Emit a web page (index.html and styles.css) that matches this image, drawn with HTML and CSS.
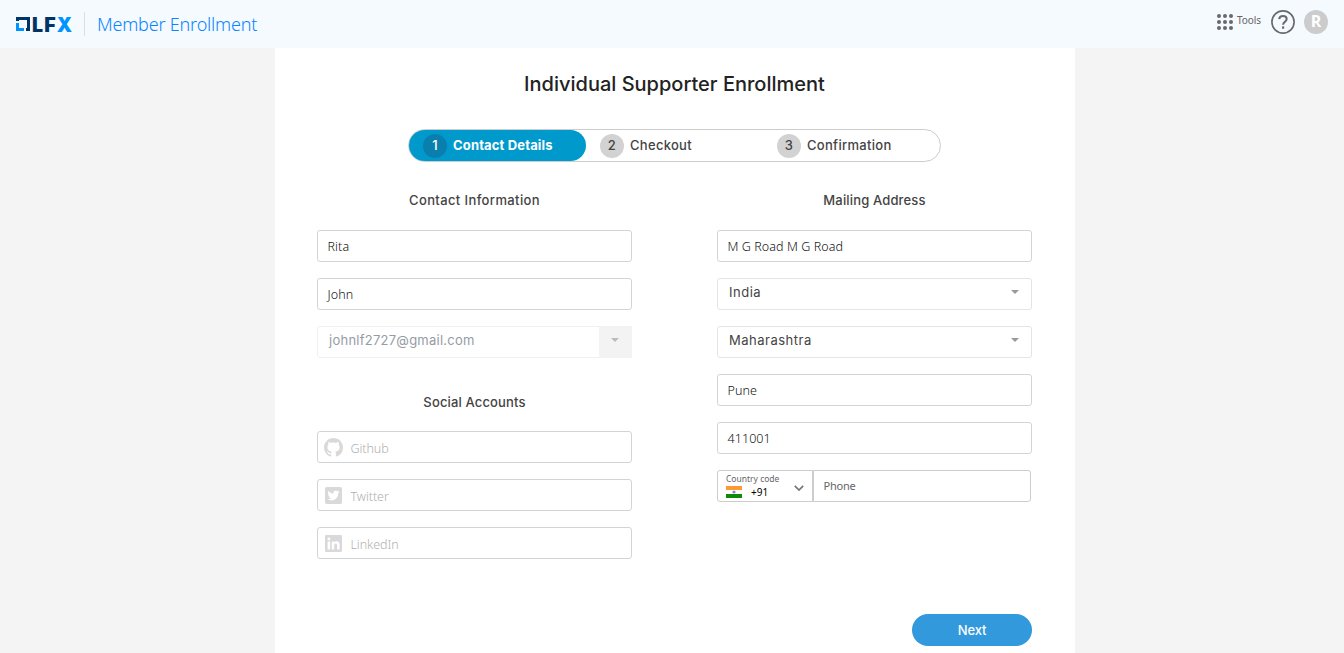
FILE: index.html
```html
<!DOCTYPE html>
<html lang="en">
<head>
<meta charset="utf-8">
<title>Individual Supporter Enrollment</title>
<link rel="stylesheet" href="styles.css">
</head>
<body>
<header class="topbar">
  <div class="logo">
    <svg class="logo-mark" viewBox="0 0 14 14"><path fill="#003366" d="M0 0H14V14H10V11H11V3H3V4H0Z"/><path fill="#0094ff" d="M0 6H3V11H8V14H0Z"/></svg>
    <span class="logo-text">LF<b>X</b></span>
  </div>
  <span class="product">Member Enrollment</span>
  <nav class="tools">
    <svg class="grid-icon" viewBox="0 0 16 16" fill="#666a6d"><circle cx="2" cy="2" r="2"/><circle cx="8" cy="2" r="2"/><circle cx="14" cy="2" r="2"/><circle cx="2" cy="8" r="2"/><circle cx="8" cy="8" r="2"/><circle cx="14" cy="8" r="2"/><circle cx="2" cy="14" r="2"/><circle cx="8" cy="14" r="2"/><circle cx="14" cy="14" r="2"/></svg>
    <span class="tools-label">Tools</span>
    <svg class="help-icon" viewBox="0 0 24 24" fill="none" stroke="#666a6d"><circle cx="12" cy="12" r="11.1" stroke-width="1.6"/><path stroke-width="2" d="M8.2 9.2C8.4 7 9.9 6 12 6s3.7 1.1 3.7 3.1c0 2.5-3.6 2.9-3.6 5.6"/><path stroke-width="2.2" d="M12.1 16.4v2.3"/></svg>
    <span class="avatar">R</span>
  </nav>
</header>
<main class="panel">
  <h1>Individual Supporter Enrollment</h1>
  <ol class="steps">
    <li class="step active"><span class="num">1</span><span class="step-name">Contact Details</span></li>
    <li class="step"><span class="num">2</span><span class="step-name">Checkout</span></li>
    <li class="step"><span class="num">3</span><span class="step-name">Confirmation</span></li>
  </ol>
  <div class="columns">
    <section class="column">
      <h2 class="contact">Contact Information</h2>
      <div class="field">Rita</div>
      <div class="field">John</div>
      <div class="field select disabled"><span class="email">johnlf2727@gmail.com</span><span class="arrow-box"><i class="arrow"></i></span></div>
      <h2 class="social">Social Accounts</h2>
      <div class="field account"><svg class="github" viewBox="0 0 16 16"><path d="M8 0C3.58 0 0 3.58 0 8c0 3.54 2.29 6.53 5.47 7.59.4.07.55-.17.55-.38 0-.19-.01-.82-.01-1.49-2.01.37-2.53-.49-2.69-.94-.09-.23-.48-.94-.82-1.13-.28-.15-.68-.52-.01-.53.63-.01 1.08.58 1.23.82.72 1.21 1.87.87 2.33.66.07-.52.28-.87.51-1.07-1.78-.2-3.64-.89-3.64-3.95 0-.87.31-1.59.82-2.15-.08-.2-.36-1.02.08-2.12 0 0 .67-.21 2.2.82.64-.18 1.32-.27 2-.27s1.36.09 2 .27c1.53-1.04 2.2-.82 2.2-.82.44 1.1.16 1.92.08 2.12.51.56.82 1.27.82 2.15 0 3.07-1.87 3.75-3.65 3.95.29.25.54.73.54 1.48 0 1.07-.01 1.93-.01 2.2 0 .21.15.46.55.38A8.01 8.01 0 0016 8c0-4.42-3.58-8-8-8z"/></svg><span>Github</span></div>
      <div class="field account"><svg viewBox="0 32 448 448"><path d="M400 32H48C21.5 32 0 53.5 0 80v352c0 26.5 21.5 48 48 48h352c26.5 0 48-21.5 48-48V80c0-26.5-21.5-48-48-48zm-48.9 158.8c.2 2.8.2 5.7.2 8.5 0 86.7-66 186.6-186.6 186.6-37.2 0-71.7-10.8-100.7-29.4 5.3.6 10.4.8 15.8.8 30.7 0 58.9-10.4 81.4-28-28.8-.6-53-19.5-61.3-45.5 10.1 1.5 19.2 1.5 29.6-1.2-30-6.1-52.5-32.5-52.5-64.4v-.8c8.7 4.9 18.9 7.9 29.6 8.3a65.447 65.447 0 0 1-29.2-54.6c0-12.2 3.2-23.4 8.9-33.1 32.3 39.8 80.8 65.8 135.2 68.6-9.3-44.5 24-80.6 64-80.6 18.9 0 35.9 7.9 47.9 20.7 14.8-2.8 29-8.3 41.6-15.8-4.9 15.2-15.2 28-28.8 36.1 13.2-1.4 26-5.1 37.8-10.2-8.9 13.1-20.1 24.7-32.9 34z"/></svg><span>Twitter</span></div>
      <div class="field account"><svg viewBox="0 32 448 448"><path d="M416 32H31.9C14.3 32 0 46.5 0 64.3v383.4C0 465.5 14.3 480 31.9 480H416c17.6 0 32-14.5 32-32.3V64.3c0-17.8-14.4-32.3-32-32.3zM135.4 416H69V202.2h66.5V416zm-33.2-243c-21.3 0-38.5-17.3-38.5-38.5S80.9 96 102.2 96c21.2 0 38.5 17.3 38.5 38.5 0 21.3-17.2 38.5-38.5 38.5zm282.1 243h-66.4V312c0-24.8-.5-56.7-34.5-56.7-34.6 0-39.9 27-39.9 54.9V416h-66.4V202.2h63.7v29.2h.9c8.9-16.8 30.6-34.5 63.7-34.5 68.1 0 80.9 44.9 80.9 103.2V416z"/></svg><span>LinkedIn</span></div>
    </section>
    <section class="column">
      <h2>Mailing Address</h2>
      <div class="field">M G Road M G Road</div>
      <div class="field select"><span class="value">India</span><i class="arrow"></i></div>
      <div class="field select"><span class="value">Maharashtra</span><i class="arrow"></i></div>
      <div class="field">Pune</div>
      <div class="field">411001</div>
      <div class="phone">
        <div class="code">
          <div class="code-main">
            <span class="code-label">Country code</span>
            <span class="code-value"><svg class="flag" viewBox="0 0 16 12"><path fill="#f93" d="M0 0h16v4H0z"/><path fill="#fff" d="M0 4h16v4H0z"/><path fill="#128807" d="M0 8h16v4H0z"/><circle cx="8" cy="6" r="1.6" fill="#8888bd"/></svg><span>+91</span></span>
          </div>
          <svg class="chevron" viewBox="0 0 10 6" fill="none" stroke="#757575" stroke-width="1.7"><path d="M.8.8 5 5 9.2.8"/></svg>
        </div>
        <div class="number">Phone</div>
      </div>
    </section>
  </div>
  <button class="next" type="button">Next</button>
</main>
</body>
</html>
```
FILE: styles.css
```css
* { box-sizing: border-box; }
body {
  margin: 0;
  height: 653px;
  overflow: hidden;
  background: #f4f4f4;
  color: #111;
  font-family: "Noto Sans", "Open Sans", sans-serif;
}
svg { display: block; flex: none; }
.topbar {
  display: flex;
  height: 48px;
  padding: 0 16px;
  background: #f5faff;
}
.logo {
  display: flex;
  width: 69px;
  height: 24px;
  margin-top: 12px;
  padding-top: 5px;
  border-right: 1px solid #dcdfe2;
}
.logo-mark { width: 14px; height: 14px; }
.logo-text {
  margin-left: 2px;
  font: 900 19.5px/16px Inter, sans-serif;
  letter-spacing: 1.1px;
  color: #036;
}
.logo-text b { font-weight: 900; color: #0094ff; }
.product {
  margin-left: 12px;
  font: 350 18px/49px "Noto Sans", sans-serif;
  letter-spacing: -.2px;
  color: #0a85ff;
}
.tools { display: flex; margin-left: auto; padding-top: 10px; }
.grid-icon { width: 16px; height: 16px; margin-top: 4px; }
.tools-label {
  width: 38px;
  padding-left: 4px;
  font-size: 10px;
  line-height: 21px;
  letter-spacing: -.1px;
  color: #666;
}
.help-icon { width: 24px; height: 24px; margin-right: 9px; }
.avatar {
  width: 24px;
  height: 24px;
  border-radius: 50%;
  background: #ccc;
  color: #fff;
  font: 700 16px/23px "Open Sans", sans-serif;
  text-align: center;
}
.panel {
  width: 800px;
  height: 605px;
  margin-left: 275px;
  padding: 22px 43px 0 42px;
  background: #fff;
}
h1 {
  margin: 0;
  font: 500 20px/29px Inter, sans-serif;
  color: #222;
  text-align: center;
}
.steps {
  display: flex;
  width: 533px;
  height: 33px;
  margin: 30px auto 0 91px;
  padding: 0;
  border: 1px solid #ccc;
  border-radius: 17px;
  list-style: none;
}
.step {
  display: flex;
  align-items: center;
  width: 177px;
  padding-left: 14px;
  font: 500 13px/24px Inter, sans-serif;
  letter-spacing: .3px;
  color: #444;
}
.step.active { background: #09c; border-radius: 16px; color: #fff; }
.num {
  width: 24px;
  height: 24px;
  margin-right: 6px;
  border-radius: 50%;
  background: #d2d2d2;
  line-height: 23px;
  text-align: center;
}
.step-name { line-height: 23px; margin-top: -1px; }
.active .num { background: #0a7fad; }
.active .step-name { font-weight: 700; letter-spacing: .15px; }
.columns { display: flex; gap: 85px; margin-top: 26px; }
.column { width: 315px; }
h2 {
  margin: 0 0 18px;
  font: 500 13px/24px Inter, sans-serif;
  letter-spacing: .15px;
  color: #444;
  text-align: center;
}
h2.contact { letter-spacing: .38px; }
h2.social { margin: 32px 0 17px; }
.field {
  height: 32px;
  margin-bottom: 16px;
  padding-left: 9.5px;
  border: 1px solid #d3d4d5;
  border-radius: 3px;
  font-size: 12.5px;
  font-weight: 350;
  line-height: 31px;
  letter-spacing: .08px;
}
.select {
  display: flex;
  justify-content: space-between;
  padding-right: 12px;
  padding-left: 11px;
  border-color: #e4e4e4;
  font: 400 13px/27px Inter, sans-serif;
  letter-spacing: .5px;
  color: #444;
}
.arrow {
  width: 8px;
  height: 4px;
  margin-top: 11px;
  border: 4px solid transparent;
  border-top-color: #999;
  border-bottom: 0;
}
.disabled {
  padding-right: 0;
  border-color: #f0f0f0;
  letter-spacing: .25px;
  color: #959ca6;
}
.arrow-box {
  width: 33px;
  height: 32px;
  margin: -1px -1px 0 0;
  padding: 1px 0 0 12px;
  background: #f3f3f3;
}
.arrow-box .arrow { display: block; border-top-color: #bbb; }
.account {
  display: flex;
  padding-left: 7px;
  font-weight: 300;
  letter-spacing: -.08px;
  color: #b0b0b0;
}
.account svg { width: 17px; height: 17px; margin-top: 7px; fill: #d9d9d9; }
.account svg.github { width: 19px; height: 19px; margin: 6px -1px; }
.account span { margin-left: 8.5px; line-height: 33px; }
.phone { display: flex; width: 314px; height: 32px; }
.code {
  display: flex;
  width: 96px;
  border: 1px solid #ccc;
  border-radius: 3px 0 0 3px;
}
.code-main { width: 69px; padding-left: 8px; }
.code-label {
  display: block;
  height: 15px;
  font-size: 8.5px;
  line-height: 16px;
  color: #666;
  white-space: nowrap;
}
.code-value { display: flex; font-size: 10px; line-height: 12px; color: #000; }
.flag { width: 16px; height: 12px; margin-right: 9px; }
.chevron { width: 10px; height: 6px; margin: 14px 0 0 7px; }
.number {
  flex: 1;
  padding-left: 9.5px;
  border: 1px solid #ccc;
  border-radius: 0 3px 3px 0;
  font-size: 11px;
  line-height: 30px;
  letter-spacing: -.2px;
  color: #666;
}
.next {
  display: block;
  width: 120px;
  height: 32px;
  margin: 39px 0 0 auto;
  padding: 0 0 1px;
  border: 0;
  border-radius: 16px;
  background: #3299dd;
  color: #fff;
  font: 500 13px/30px Inter, sans-serif;
  letter-spacing: -.2px;
}
```
